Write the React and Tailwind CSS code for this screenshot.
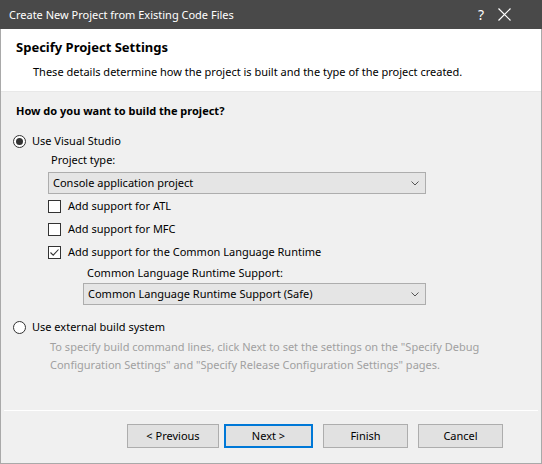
import { useState } from "react";

const font = { fontFamily: '"Noto Sans", "Open Sans", sans-serif' };

function Radio({ checked }) {
  return (
    <span className="flex h-[13px] w-[13px] shrink-0 items-center justify-center rounded-full border border-[#333] bg-white">
      {checked ? <span className="h-[7px] w-[7px] rounded-full bg-[#333]" /> : null}
    </span>
  );
}

function Checkbox({ checked }) {
  return (
    <span className="flex h-[13px] w-[13px] shrink-0 items-center justify-center border border-[#333] bg-white">
      {checked ? (
        <svg width="11" height="11" viewBox="0 0 11 11">
          <path d="M1.5 5.5 L4.2 8.2 L9.5 2.5" fill="none" stroke="#333" strokeWidth="1.1" />
        </svg>
      ) : null}
    </span>
  );
}

function Select({ value, className }) {
  return (
    <div
      className={`flex h-[22px] items-center justify-between border border-[#adadad] bg-[#e5e5e5] pl-[4px] pr-[6px] ${className}`}
    >
      <span>{value}</span>
      <svg width="8" height="5" viewBox="0 0 8 5">
        <path d="M0.5 0.5 L4 4 L7.5 0.5" fill="none" stroke="#555" strokeWidth="1" />
      </svg>
    </div>
  );
}

function Button({ children, focused, className }) {
  return (
    <button
      type="button"
      className={`h-[24px] bg-[#e1e1e1] text-[11px] text-black ${
        focused ? "border-2 border-[#0078d7]" : "border border-[#adadad]"
      } ${className}`}
    >
      {children}
    </button>
  );
}

export default function App() {
  const [mode] = useState("vs");

  return (
    <div className="flex h-[464px] w-[542px] flex-col bg-[#f0f0f0] text-[11px] leading-[16px] text-black" style={font}>
      <div className="flex h-[29px] shrink-0 items-center bg-[#494949] pl-[9px] text-white">
        <span className="flex-1 text-[11px]">Create New Project from Existing Code Files</span>
        <span className="mr-[14px] text-[14px]">?</span>
        <svg className="mr-[31px]" width="13" height="13" viewBox="0 0 13 13">
          <path d="M0.5 0.5 L12.5 12.5 M12.5 0.5 L0.5 12.5" stroke="#fff" strokeWidth="1.2" />
        </svg>
      </div>

      <div className="flex flex-1 flex-col border-x border-b border-[#a9a9a9]">
        <div className="h-[63px] shrink-0 border-b border-[#e8e8e8] bg-white pl-[15px] pt-[8px]">
          <div className="text-[13px] font-bold leading-[20px]">Specify Project Settings</div>
          <div className="mt-[7px] pl-[17px]">
            These details determine how the project is built and the type of the project created.
          </div>
        </div>

        <div className="flex flex-1 flex-col">
          <div className="ml-[15px] mt-[11px] font-bold">How do you want to build the project?</div>

          <div className="ml-[12px] mt-[14px] flex items-center gap-[6px]">
            <Radio checked={mode === "vs"} />
            <span>Use Visual Studio</span>
          </div>

          <div className="ml-[50px] mt-[3px]">Project type:</div>
          <Select value="Console application project" className="ml-[47px] mt-[4px] w-[378px]" />

          <div className="ml-[47px] mt-[4px] flex items-center gap-[7px]">
            <Checkbox />
            <span>Add support for ATL</span>
          </div>
          <div className="ml-[47px] mt-[7px] flex items-center gap-[7px]">
            <Checkbox />
            <span>Add support for MFC</span>
          </div>
          <div className="ml-[47px] mt-[7px] flex items-center gap-[7px]">
            <Checkbox checked />
            <span>Add support for the Common Language Runtime</span>
          </div>

          <div className="ml-[86px] mt-[5px]">Common Language Runtime Support:</div>
          <Select value="Common Language Runtime Support (Safe)" className="ml-[82px] mt-[2px] w-[343px]" />

          <div className="ml-[12px] mt-[14px] flex items-center gap-[6px]">
            <Radio checked={mode === "external"} />
            <span>Use external build system</span>
          </div>
          <div className="ml-[49px] mt-[3px] w-[440px] leading-[18px] text-[#a0a0a0]">
            To specify build command lines, click Next to set the settings on the "Specify Debug Configuration
            Settings" and "Specify Release Configuration Settings" pages.
          </div>

          <div className="mx-[3px] mt-auto h-px bg-white" />
          <div className="flex h-[52px] items-start justify-end pr-[38px] pt-[13px]">
            <Button className="w-[92px]">&lt; Previous</Button>
            <Button focused className="ml-[5px] w-[89px]">
              Next &gt;
            </Button>
            <Button className="ml-[10px] w-[85px]">Finish</Button>
            <Button className="ml-[10px] w-[85px]">Cancel</Button>
          </div>
        </div>
      </div>
    </div>
  );
}
